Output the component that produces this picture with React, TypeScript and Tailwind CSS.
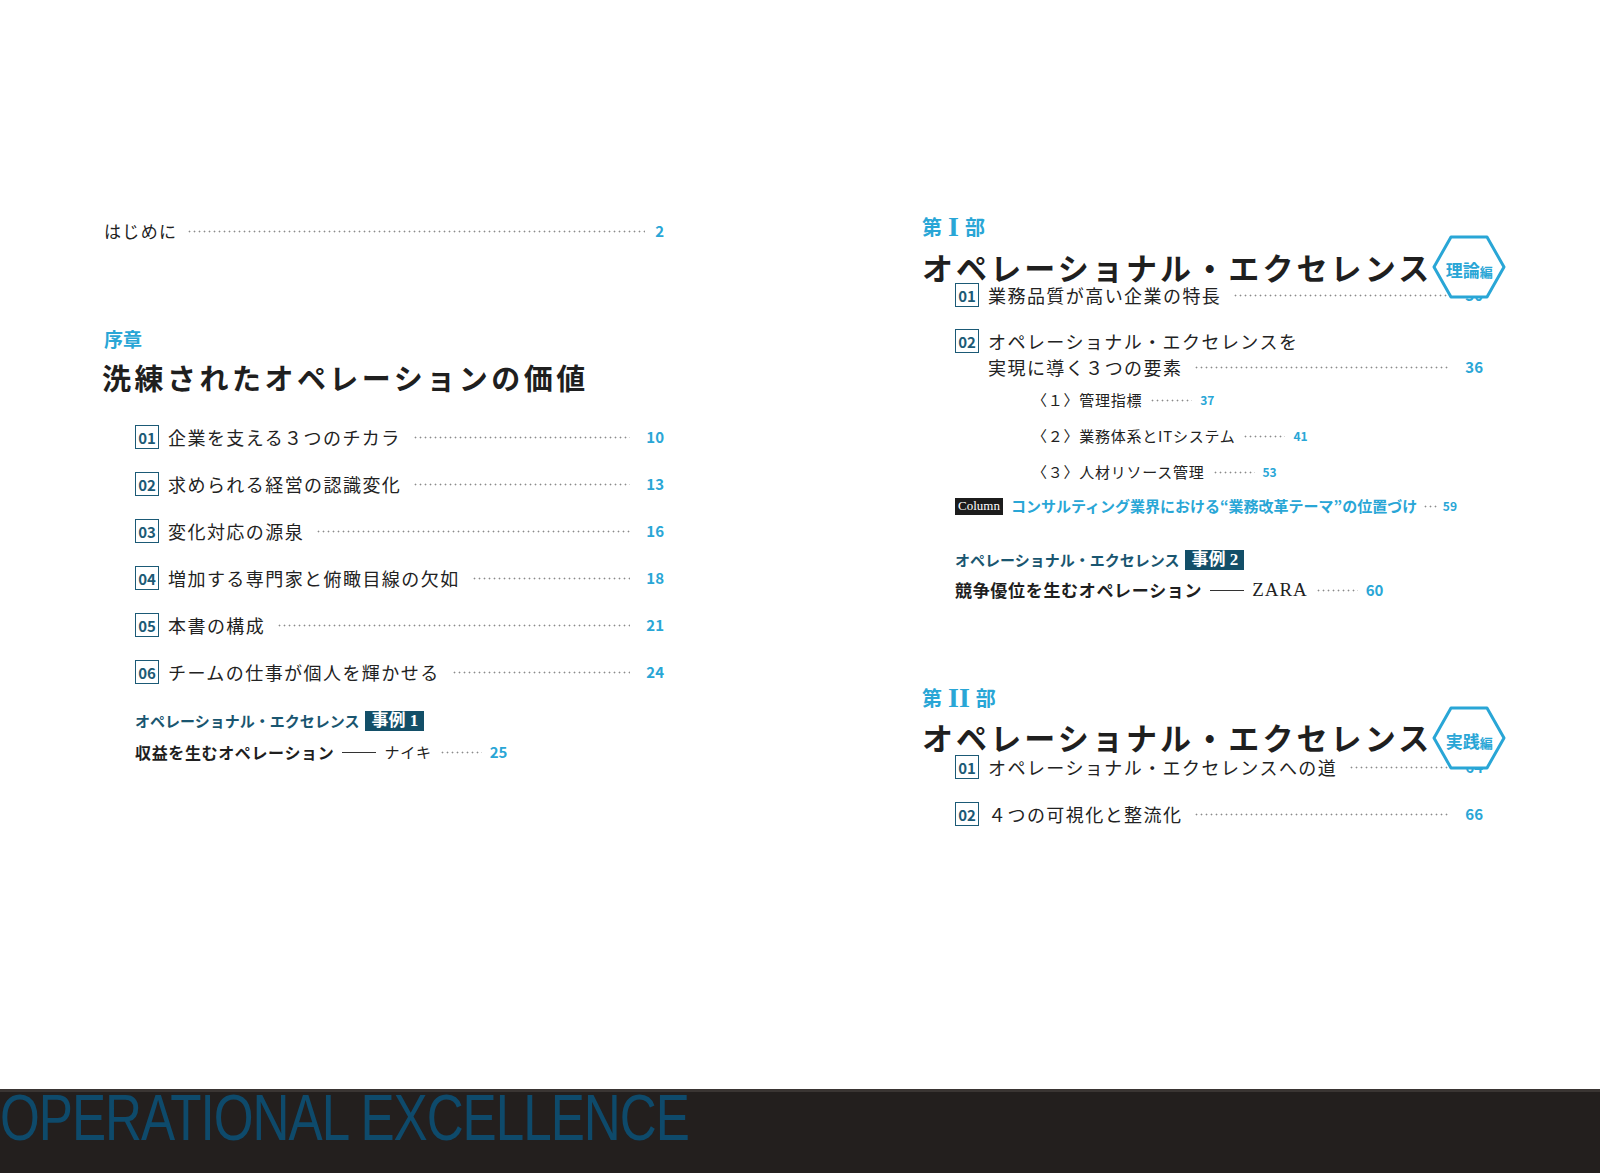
import React from "react";

const F = { fontFamily: '"Noto Sans CJK JP", "Noto Sans", sans-serif' };
const SERIF = { fontFamily: '"Liberation Serif", "Noto Sans CJK JP", serif' };

function Dots({ className = "" }: { className?: string }) {
  return (
    <div
      className={
        "h-[3px] bg-[radial-gradient(circle,#8a8a8a_0.8px,transparent_1.1px)] bg-[length:5px_3px] bg-repeat-x " +
        className
      }
    />
  );
}

function Num({ n }: { n: string }) {
  return (
    <span className="inline-flex items-center justify-center w-[24px] h-[24px] border-[1.5px] border-[#1b5a76] text-[#1b5a76] text-[15px] font-bold leading-none shrink-0">
      {n}
    </span>
  );
}

function Item({ n, text, page }: { n: string; text: string; page: string }) {
  return (
    <div className="flex items-center h-[26px]">
      <Num n={n} />
      <span className="ml-[9px] text-[18px] tracking-[0.08em] text-[#222] whitespace-nowrap">{text}</span>
      <Dots className="flex-1 mx-[12px]" />
      <span className="text-[15px] font-bold text-[#29a6d6] w-[22px] text-right">{page}</span>
    </div>
  );
}

function Sub({ text, page }: { text: string; page: string }) {
  return (
    <div className="flex items-center h-[22px]">
      <span className="text-[15px] tracking-[0.05em] text-[#222] whitespace-nowrap">{text}</span>
      <Dots className="w-[42px] mx-[8px]" />
      <span className="text-[12px] font-bold text-[#29a6d6]">{page}</span>
    </div>
  );
}

function Hex({ a, b }: { a: string; b: string }) {
  return (
    <div className="relative w-[74px] h-[64px] shrink-0">
      <svg width="74" height="64" viewBox="0 0 74 64" className="absolute inset-0">
        <polygon points="19,2 55,2 72,32 55,62 19,62 2,32" fill="white" stroke="#29a6d6" strokeWidth="3" strokeLinejoin="round" />
      </svg>
      <div className="absolute inset-0 flex items-end justify-center pb-[21px] text-[#29a6d6] font-bold leading-none">
        <span className="text-[17px]">{a}</span>
        <span className="text-[13px]">{b}</span>
      </div>
    </div>
  );
}

function Jirei({ n }: { n: string }) {
  return (
    <div className="flex items-center h-[22px]">
      <span className="text-[15px] font-bold text-[#1a5670] whitespace-nowrap">オペレーショナル・エクセレンス</span>
      <span className="ml-[6px] bg-[#134f68] text-white px-[6px] h-[20px] flex items-center text-[17px] font-bold" style={SERIF}>
        事例 {n}
      </span>
    </div>
  );
}

function PartHead({ roman, a, b, hexMt }: { roman: string; a: string; b: string; hexMt: string }) {
  return (
    <div className="flex items-start">
      <div className="flex-1">
        <div className="flex items-center h-[28px] text-[20px] font-bold text-[#29a6d6]">
          <span>第</span>
          <span className="mx-[6px] text-[28px] leading-none" style={SERIF}>{roman}</span>
          <span>部</span>
        </div>
        <div className={"h-[40px] flex items-center text-[31px] font-bold tracking-[0.1em] text-[#1f1f1f] whitespace-nowrap " + hexMt}>
          オペレーショナル・エクセレンス
        </div>
      </div>
      <div className="mt-[22px]">
        <Hex a={a} b={b} />
      </div>
    </div>
  );
}

export default function App() {
  return (
    <div className="w-[1600px] h-[1173px] bg-white overflow-hidden flex flex-col" style={F}>
      <div className="h-[1089px] flex">
        {/* left */}
        <div className="ml-[104px] w-[560px] pt-[219px] flex flex-col">
          <div className="flex items-center h-[24px]">
            <span className="text-[17px] tracking-[0.08em] text-[#222]">はじめに</span>
            <Dots className="flex-1 mx-[10px]" />
            <span className="text-[15px] font-bold text-[#29a6d6]">2</span>
          </div>
          <div className="mt-[84px] h-[24px] flex items-center text-[19px] font-bold text-[#29a6d6]">序章</div>
          <div className="mt-[7px] h-[40px] flex items-center text-[29px] font-bold tracking-[0.12em] text-[#1f1f1f] -ml-[2px]">
            洗練されたオペレーションの価値
          </div>
          <div className="mt-[26px] pl-[31px] flex flex-col gap-[21px]">
            <Item n="01" text="企業を支える３つのチカラ" page="10" />
            <Item n="02" text="求められる経営の認識変化" page="13" />
            <Item n="03" text="変化対応の源泉" page="16" />
            <Item n="04" text="増加する専門家と俯瞰目線の欠如" page="18" />
            <Item n="05" text="本書の構成" page="21" />
            <Item n="06" text="チームの仕事が個人を輝かせる" page="24" />
          </div>
          <div className="mt-[25px] pl-[31px]">
            <Jirei n="1" />
            <div className="mt-[8px] h-[24px] flex items-center">
              <span className="text-[16px] font-bold text-[#1f1f1f] tracking-[0.04em]">収益を生むオペレーション</span>
              <span className="w-[34px] h-px bg-[#333] mx-[8px]" />
              <span className="text-[15px] text-[#222] tracking-[0.05em]">ナイキ</span>
              <Dots className="w-[42px] mx-[8px]" />
              <span className="text-[15px] font-bold text-[#29a6d6]">25</span>
            </div>
          </div>
        </div>

        {/* right */}
        <div className="ml-[258px] w-[580px] pt-[213px] flex flex-col">
          <PartHead roman="I" a="理論" b="編" hexMt="mt-[6px]" />
          <div className="pl-[33px] pr-[19px] -mt-[17px]">
            <Item n="01" text="業務品質が高い企業の特長" page="30" />
            <div className="mt-[21px] flex items-start">
              <Num n="02" />
              <div className="flex-1 ml-[9px] -mt-[1px]">
                <div className="h-[26px] flex items-center text-[18px] tracking-[0.08em] text-[#222]">オペレーショナル・エクセレンスを</div>
                <div className="h-[26px] flex items-center">
                  <span className="text-[18px] tracking-[0.08em] text-[#222] whitespace-nowrap">実現に導く３つの要素</span>
                  <Dots className="flex-1 mx-[12px]" />
                  <span className="text-[15px] font-bold text-[#29a6d6] w-[22px] text-right">36</span>
                </div>
              </div>
            </div>
            <div className="mt-[9px] pl-[77px] flex flex-col gap-[14px]">
              <Sub text="〈１〉管理指標" page="37" />
              <Sub text="〈２〉業務体系とITシステム" page="41" />
              <Sub text="〈３〉人材リソース管理" page="53" />
            </div>
            <div className="mt-[12px] h-[22px] flex items-center pr-[26px]">
              <span className="bg-[#1c1c1c] text-white text-[13px] px-[3px] h-[17px] flex items-center" style={SERIF}>Column</span>
              <span className="ml-[8px] text-[15px] font-bold text-[#29a6d6] whitespace-nowrap">コンサルティング業界における“業務改革テーマ”の位置づけ</span>
              <Dots className="flex-1 mx-[6px]" />
              <span className="text-[12px] font-bold text-[#29a6d6]">59</span>
            </div>
            <div className="mt-[32px]">
              <Jirei n="2" />
              <div className="mt-[7px] h-[24px] flex items-center">
                <span className="text-[17px] font-bold text-[#1f1f1f] tracking-[0.04em]">競争優位を生むオペレーション</span>
                <span className="w-[34px] h-px bg-[#333] mx-[8px]" />
                <span className="text-[19px] text-[#222] tracking-[0.05em]" style={SERIF}>ZARA</span>
                <Dots className="w-[42px] mx-[8px]" />
                <span className="text-[15px] font-bold text-[#29a6d6]">60</span>
              </div>
            </div>
          </div>

          <div className="mt-[82px]">
            <PartHead roman="II" a="実践" b="編" hexMt="mt-[5px]" />
          </div>
          <div className="pl-[33px] pr-[19px] -mt-[16px] flex flex-col gap-[21px]">
            <Item n="01" text="オペレーショナル・エクセレンスへの道" page="64" />
            <Item n="02" text="４つの可視化と整流化" page="66" />
          </div>
        </div>
      </div>

      {/* footer */}
      <div className="h-[84px] bg-[#231f1e] border-t-[3px] border-[#3a3533] overflow-hidden">
        <div
          className="origin-left scale-x-[0.8] whitespace-nowrap text-[64px] leading-none text-[#0e4a6b] -mt-[6px] tracking-[-0.02em]"
          style={{ fontFamily: '"Liberation Sans", sans-serif' }}
        >
          OPERATIONAL EXCELLENCE
        </div>
      </div>
    </div>
  );
}
